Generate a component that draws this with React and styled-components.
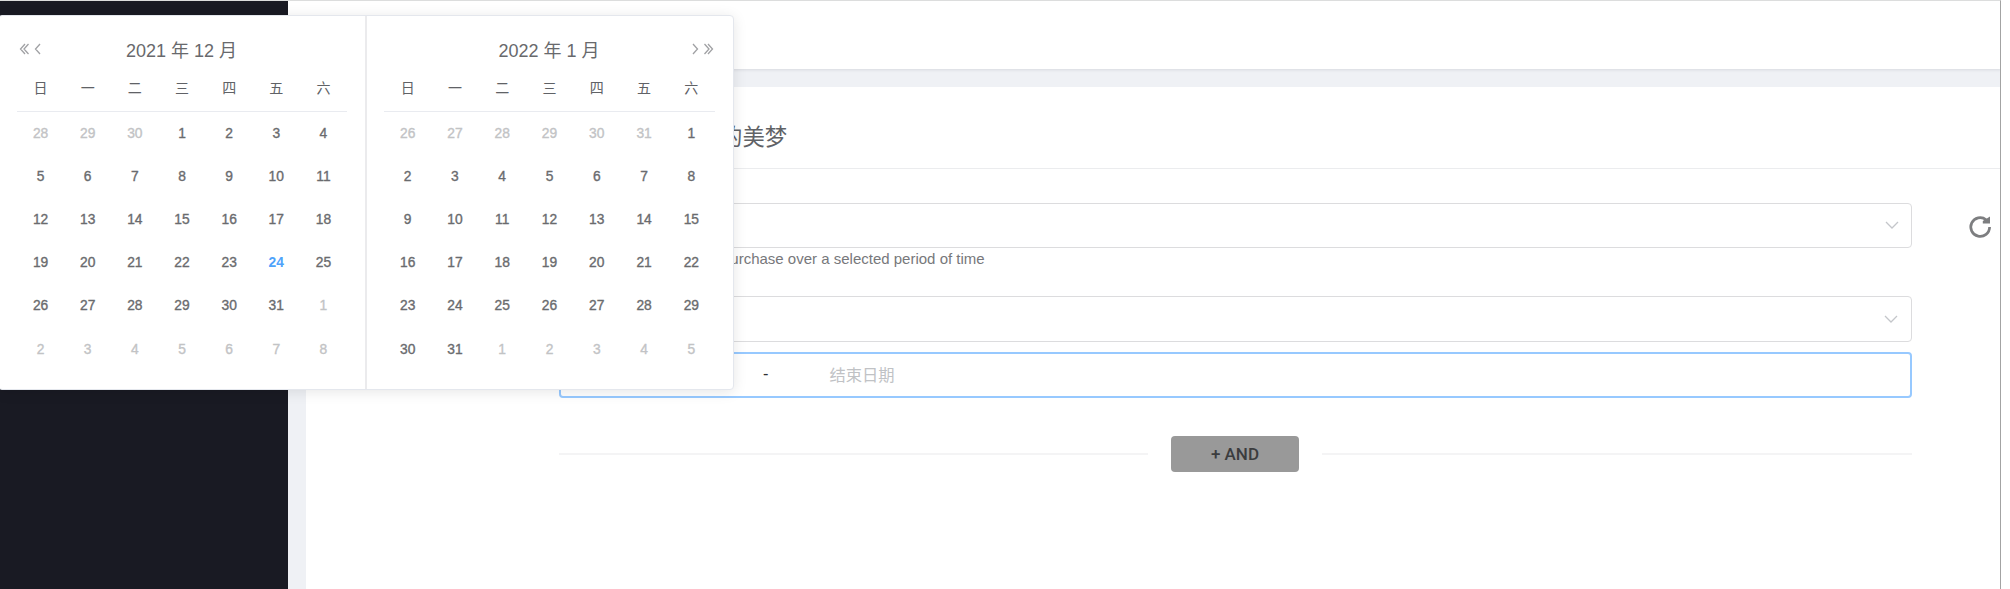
import React from "react";
import styled, { createGlobalStyle } from "styled-components";

const Global = createGlobalStyle`
  * { box-sizing: border-box; }
  body { margin: 0; background: #fff; overflow: hidden; font-family: "Liberation Sans", "Noto Sans CJK SC", sans-serif; }
`;

const Page = styled.div`
  position: relative;
  display: flex;
  width: 2001px;
  height: 589px;
  border-top: 1px solid #dcdddd;
  border-right: 1px solid #a3a3a3;
  overflow: hidden;
`;
const Sidebar = styled.aside`
  width: 288px;
  flex: none;
  background: #191a23;
`;
const Main = styled.main`
  flex: 1;
  display: flex;
  flex-direction: column;
  background: #eff1f5;
`;
const Header = styled.header`
  height: 68px;
  flex: none;
  background: #fff;
  box-shadow: 0 1px 3px rgba(0, 21, 41, 0.1);
`;
const Card = styled.section`
  flex: 1;
  margin: 18px 0 0 18px;
  background: #fff;
`;
const CardTitle = styled.h1`
  margin: 0;
  height: 82px;
  padding: 19px 0 0 414px;
  border-bottom: 1px solid #ebecee;
  font-size: 22.4px;
  line-height: 64px;
  font-weight: 400;
  color: #606266;
`;
const Body = styled.div`
  display: flex;
  padding: 34px 9px 0 253px;
`;
const Form = styled.div`
  width: 1353px;
  flex: none;
  display: flex;
  flex-direction: column;
`;
const Field = styled.div`
  height: ${(p) => p.$height}px;
  flex: none;
  display: flex;
  align-items: center;
  justify-content: flex-end;
  padding: 0 ${(p) => p.$inset || 12}px 1px 0;
  border: 1px solid #dcdcde;
  border-radius: 4px;
`;
const Hint = styled.p`
  margin: 0;
  height: 48px;
  padding-left: 163px;
  font-size: 15px;
  line-height: 22px;
  color: #77787b;
  white-space: nowrap;
`;
const DateRange = styled.div`
  height: 46px;
  margin-top: 10px;
  flex: none;
  display: flex;
  align-items: center;
  border: 2px solid #97c9ff;
  border-radius: 4px;
  padding: 0 0 3px 202px;
  font-size: 16.3px;
  color: #303133;
`;
const EndDate = styled.span`
  margin-left: 61px;
  color: #c0c2c5;
`;
const Separator = styled.div`
  display: flex;
  align-items: center;
  gap: 23px;
  margin-top: 38px;
`;
const Rule = styled.i`
  flex: ${(p) => p.$grow} 0 0;
  height: 2px;
  background: #f4f4f5;
`;
const AndButton = styled.button`
  width: 128px;
  height: 36px;
  padding: 0 0 1px;
  border: 0;
  border-radius: 4px;
  background: #999;
  color: #3b3c3e;
  font: 500 17px Roboto, sans-serif;
`;
const Refresh = styled.svg`
  width: 24px;
  height: 24px;
  margin: 12px 0 0 56px;
  flex: none;
`;

const Picker = styled.div`
  position: absolute;
  left: -2px;
  top: 14px;
  width: 736px;
  height: 375px;
  display: flex;
  background: #fff;
  border: 1px solid #e4e7ed;
  border-radius: 4px;
  box-shadow: 0 2px 14px rgba(0, 0, 0, 0.1);
`;
const Panel = styled.div`
  width: ${(p) => p.$width}px;
  padding: ${(p) => p.$pad};
  border-right: ${(p) => (p.$divided ? "2px solid #ebebed" : "0")};
`;
const MonthBar = styled.div`
  height: 53px;
  padding-top: 16px;
  display: grid;
  grid-template-columns: 30px 1fr 30px;
  font-size: 18px;
  line-height: 38px;
  color: #68696c;
  text-align: center;
`;
const MonthTitle = styled.span`
  padding-right: ${(p) => p.$nudge || 0}px;
`;
const Arrows = styled.svg`
  width: 24px;
  height: 14px;
  margin: 10px 0 0 ${(p) => p.$shift}px;
`;
const WeekHead = styled.div`
  display: grid;
  grid-template-columns: repeat(7, 1fr);
  height: 43px;
  border-bottom: 1px solid #e9ebf0;
  color: #606266;
  font-size: 14px;
  line-height: 38px;
  text-align: center;
`;
const Week = styled.div`
  display: grid;
  grid-template-columns: repeat(7, 1fr);
  height: ${(p) => (p.$tall ? 44 : 43)}px;
  font-size: 13.8px;
  line-height: 43px;
  text-align: center;
`;
const Day = styled.span`
  color: ${(p) => (p.$today ? "#4fa3fb" : p.$muted ? "#c2c3c5" : "#6a6b6e")};
  font-weight: ${(p) => (p.$today ? 700 : 400)};
  -webkit-text-stroke: ${(p) => (p.$today ? 0 : 0.35)}px currentColor;
`;

const names = ["日", "一", "二", "三", "四", "五", "六"];

function Month({ before, length, today }) {
  const days = Array.from({ length: 42 }, (_, i) => {
    const n = i - before.length + 1;
    if (n < 1) return { n: before[i], muted: true };
    if (n > length) return { n: n - length, muted: true };
    return { n, today: n === today };
  });
  return (
    <>
      <WeekHead>{names.map((n) => <span key={n}>{n}</span>)}</WeekHead>
      {[0, 1, 2, 3, 4, 5].map((w) => (
        <Week key={w} $tall={w === 4}>
          {days.slice(w * 7, w * 7 + 7).map((d, i) => (
            <Day key={i} $muted={d.muted} $today={d.today}>{d.n}</Day>
          ))}
        </Week>
      ))}
    </>
  );
}

const Chevron = () => (
  <svg width="14" height="8" viewBox="0 0 14 8" fill="none" stroke="#c4c6ca" strokeWidth="1.3">
    <path d="M1 1l6 6 6-6" />
  </svg>
);

export default function App() {
  return (
    <>
      <Global />
      <Page>
        <Sidebar />
        <Main>
          <Header />
          <Card>
            <CardTitle>的美梦</CardTitle>
            <Body>
              <Form>
                <Field $height={45}><Chevron /></Field>
                <Hint>purchase over a selected period of time</Hint>
                <Field $height={46} $inset={13}><Chevron /></Field>
                <DateRange>-<EndDate>结束日期</EndDate></DateRange>
                <Separator>
                  <Rule $grow={589} />
                  <AndButton>+ AND</AndButton>
                  <Rule $grow={590} />
                </Separator>
              </Form>
              <Refresh viewBox="0 0 24 24" fill="none" stroke="#7d7e80" strokeWidth="2.7">
                <path d="M21.6 12a9.4 9.4 0 1 1-3.5-7.3" />
                <path d="M22 1.5v7h-7.2v-2.6z" fill="#7d7e80" stroke="none" />
              </Refresh>
            </Body>
          </Card>
        </Main>
        <Picker>
          <Panel $width={368} $pad="0 18px 0 18px" $divided>
            <MonthBar>
              <Arrows $shift={2} viewBox="0 0 24 14" fill="none" stroke="#a0a1a4" strokeWidth="1.3">
                <path d="M6 2L1.5 7L6 12M9.5 2L5 7l4.5 5M21 2l-4.5 5 4.5 5" />
              </Arrows>
              <MonthTitle $nudge={1}>2021 年 12 月</MonthTitle>
            </MonthBar>
            <Month before={[28, 29, 30]} length={31} today={24} />
          </Panel>
          <Panel $width={366} $pad="0 18px 0 17px">
            <MonthBar>
              <i />
              <MonthTitle $nudge={1}>2022 年 1 月</MonthTitle>
              <Arrows $shift={6} viewBox="0 0 24 14" fill="none" stroke="#a0a1a4" strokeWidth="1.3">
                <path d="M2 2l4.5 5L2 12M13.5 2L18 7l-4.5 5M17 2l4.5 5-4.5 5" />
              </Arrows>
            </MonthBar>
            <Month before={[26, 27, 28, 29, 30, 31]} length={31} />
          </Panel>
        </Picker>
      </Page>
    </>
  );
}
